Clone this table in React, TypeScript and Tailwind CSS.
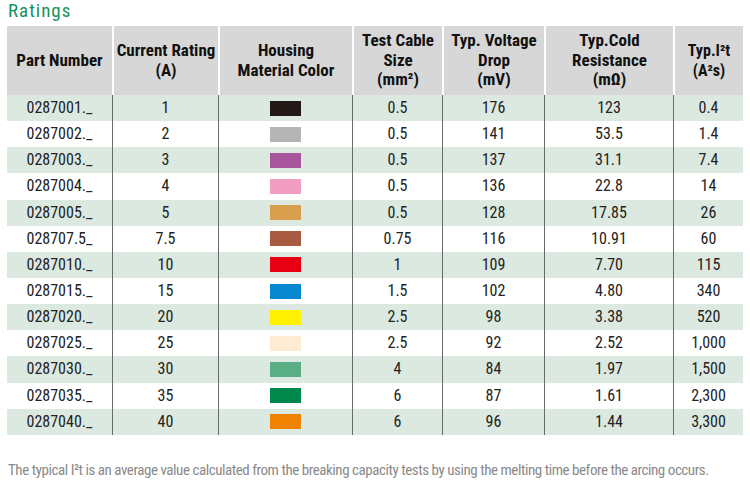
import React from "react";

const rows: [string, string, string, string, string, string, string][] = [
  ["0287001._", "1", "#231815", "0.5", "176", "123", "0.4"],
  ["0287002._", "2", "#b5b5b6", "0.5", "141", "53.5", "1.4"],
  ["0287003._", "3", "#a9559c", "0.5", "137", "31.1", "7.4"],
  ["0287004._", "4", "#f19ec2", "0.5", "136", "22.8", "14"],
  ["0287005._", "5", "#d99f4c", "0.5", "128", "17.85", "26"],
  ["028707.5_", "7.5", "#a95b41", "0.75", "116", "10.91", "60"],
  ["0287010._", "10", "#e60012", "1", "109", "7.70", "115"],
  ["0287015._", "15", "#0787cf", "1.5", "102", "4.80", "340"],
  ["0287020._", "20", "#fff100", "2.5", "98", "3.38", "520"],
  ["0287025._", "25", "#fdebd2", "2.5", "92", "2.52", "1,000"],
  ["0287030._", "30", "#5aae86", "4", "84", "1.97", "1,500"],
  ["0287035._", "35", "#00874c", "6", "87", "1.61", "2,300"],
  ["0287040._", "40", "#ef8200", "6", "96", "1.44", "3,300"],
];

const font = { fontFamily: '"Liberation Sans Narrow", "Roboto Condensed", "Liberation Sans", sans-serif' };

export default function App() {
  return (
    <div className="w-[750px] h-[493px] bg-white overflow-hidden" style={font}>
      <div className="pl-[8px] h-[26px] text-[19px] leading-[21px] tracking-[1px] text-[#16915a]">Ratings</div>
      <div className="ml-[7px] w-[736px]">
        <div className="grid grid-cols-[105px_106px_134px_90px_102px_129px_70px] h-[69px] bg-[#d7d7d7] text-[17px] leading-[19.5px] font-bold text-[#111] text-center">
          <div className="flex items-center justify-center">Part Number</div>
          <div className="flex items-center justify-center border-l-2 border-white">Current Rating<br />(A)</div>
          <div className="flex items-center justify-center border-l-2 border-white">Housing<br />Material Color</div>
          <div className="flex items-center justify-center border-l-2 border-white">Test Cable<br />Size<br />(mm²)</div>
          <div className="flex items-center justify-center border-l-2 border-white">Typ. Voltage<br />Drop<br />(mV)</div>
          <div className="flex items-center justify-center border-l-2 border-white">Typ.Cold<br />Resistance<br />(mΩ)</div>
          <div className="flex items-center justify-center border-l-2 border-white text-[16px]">Typ.I²t<br />(A²s)</div>
        </div>
        {rows.map((r, i) => (
          <div
            key={r[0]}
            className={`grid grid-cols-[105px_106px_134px_90px_102px_129px_70px] h-[26.15px] text-[16px] text-[#222] text-center ${i % 2 === 0 ? "bg-[#dce9e0]" : "bg-white"}`}
          >
            <div className="flex items-center justify-center">{r[0]}</div>
            <div className="flex items-center justify-center border-l-[1.5px] border-[#6a6a6a]">{r[1]}</div>
            <div className="flex items-center justify-center border-l-[1.5px] border-[#6a6a6a]">
              <div className="w-[31px] h-[15px]" style={{ backgroundColor: r[2] }} />
            </div>
            <div className="flex items-center justify-center border-l-[1.5px] border-[#6a6a6a]">{r[3]}</div>
            <div className="flex items-center justify-center border-l-[1.5px] border-[#6a6a6a]">{r[4]}</div>
            <div className="flex items-center justify-center border-l-[1.5px] border-[#6a6a6a]">{r[5]}</div>
            <div className="flex items-center justify-center border-l-[1.5px] border-[#6a6a6a]">{r[6]}</div>
          </div>
        ))}
      </div>
      <div className="pl-[8px] pt-[26px] text-[15px] leading-[18px] tracking-[-0.45px] whitespace-nowrap text-[#8a8a8a]">
        The typical I²t is an average value calculated from the breaking capacity tests by using the melting time before the arcing occurs.
      </div>
    </div>
  );
}
